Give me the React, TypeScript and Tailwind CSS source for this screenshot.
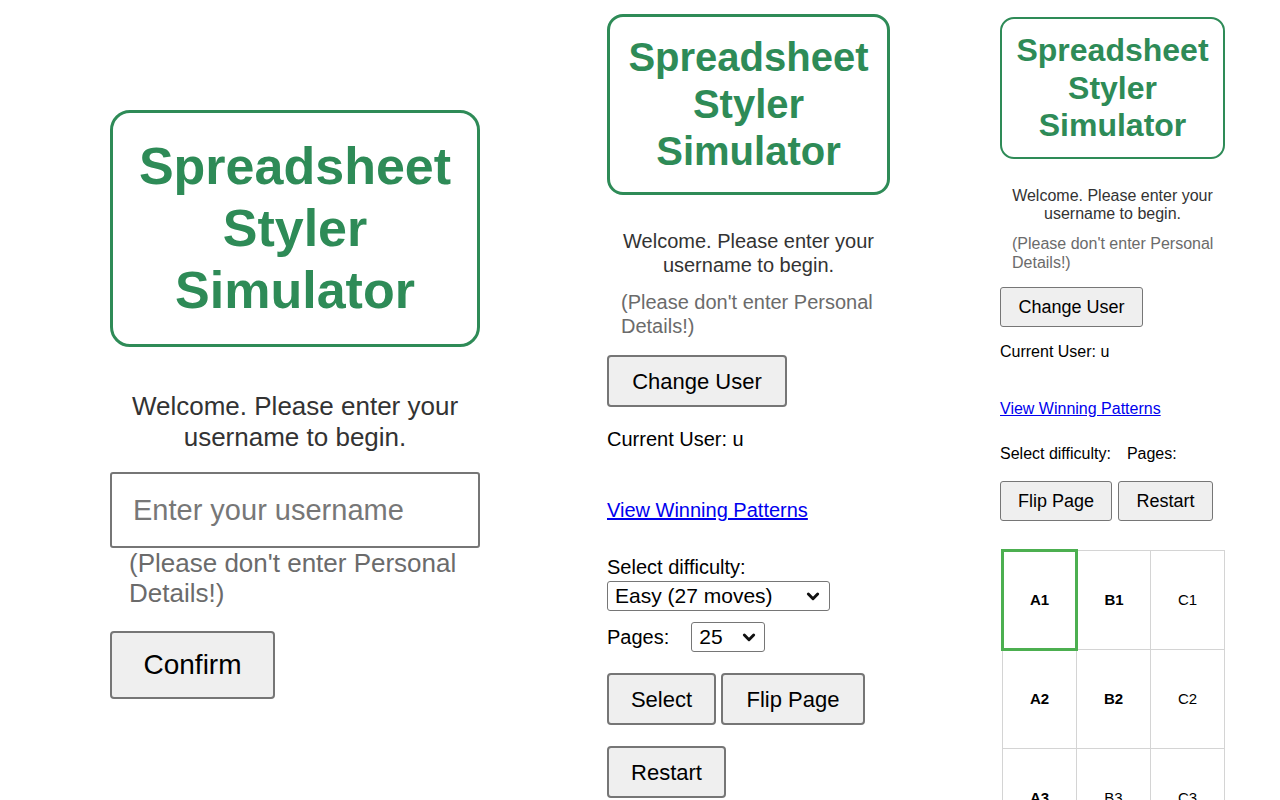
import React from "react";

const font = "font-['Liberation_Sans',Arial,sans-serif]";

function Chevron({ size }: { size: number }) {
  return (
    <svg width={size} height={size} viewBox="0 0 12 12" fill="none">
      <path d="M2.5 4.5 L6 8 L9.5 4.5" stroke="#111" strokeWidth="2.2" strokeLinecap="round" strokeLinejoin="round" />
    </svg>
  );
}

const cells = [
  [
    { label: "A1", bold: true, active: true },
    { label: "B1", bold: true },
    { label: "C1" },
  ],
  [{ label: "A2", bold: true }, { label: "B2", bold: true }, { label: "C2" }],
  [{ label: "A3", bold: true }, { label: "B3" }, { label: "C3" }],
  [{ label: "A4" }, { label: "B4" }, { label: "C4" }],
];

export default function App() {
  return (
    <div className={`${font} h-[800px] w-[1280px] overflow-hidden bg-white flex items-start text-black`}>
      {/* large login view */}
      <div className="ml-[110px] w-[370px] pt-[110px] flex flex-col shrink-0">
        <div className="h-[237px] border-[3px] border-[#2e8b57] rounded-[20px] py-[22px] text-center text-[#2e8b57] font-bold text-[52px] leading-[62px]">
          <div>Spreadsheet</div>
          <div>Styler</div>
          <div>Simulator</div>
        </div>
        <p className="mt-[44px] text-center text-[26px] leading-[31px] text-[#333]">
          Welcome. Please enter your
          <br />
          username to begin.
        </p>
        <input
          placeholder="Enter your username"
          className="mt-[19px] h-[76px] w-full border-2 border-[#767676] rounded-[3px] px-[21px] text-[29px] placeholder:text-[#777] outline-none"
        />
        <p className="pl-[19px] text-[26px] leading-[30px] text-[#6b6b6b]">
          (Please don't enter Personal
          <br />
          Details!)
        </p>
        <button className="mt-[23px] w-[165px] h-[68px] bg-[#efefef] border-2 border-[#767676] rounded-[4px] text-[28px]">
          Confirm
        </button>
      </div>

      {/* medium game view */}
      <div className="ml-[127px] w-[283px] pt-[14px] flex flex-col shrink-0">
        <div className="h-[181px] border-[3px] border-[#2e8b57] rounded-[16px] py-[17px] text-center text-[#2e8b57] font-bold text-[40px] leading-[47px]">
          <div>Spreadsheet</div>
          <div>Styler</div>
          <div>Simulator</div>
        </div>
        <p className="mt-[34px] text-center text-[20px] leading-[24px] text-[#333]">
          Welcome. Please enter your
          <br />
          username to begin.
        </p>
        <p className="mt-[13px] pl-[14px] text-[20px] leading-[24px] text-[#6b6b6b]">
          (Please don't enter Personal
          <br />
          Details!)
        </p>
        <button className="mt-[17px] w-[180px] h-[52px] bg-[#efefef] border-2 border-[#767676] rounded-[4px] text-[22px]">
          Change User
        </button>
        <p className="mt-[20px] text-[20px] leading-[24px]">Current User: u</p>
        <a href="#" className="mt-[47px] self-start text-[20px] leading-[24px] text-[#0000ee] underline">
          View Winning Patterns
        </a>
        <p className="mt-[33px] text-[20px] leading-[24px]">Select difficulty:</p>
        <div className="mt-[2px] w-[223px] h-[30px] border-[1.5px] border-[#767676] rounded-[3px] flex items-center justify-between pl-[7px] pr-[8px] text-[21px]">
          <span>Easy (27 moves)</span>
          <Chevron size={16} />
        </div>
        <div className="mt-[11px] flex items-center gap-[22px]">
          <span className="text-[20px] leading-[24px]">Pages:</span>
          <div className="w-[74px] h-[30px] border-[1.5px] border-[#767676] rounded-[3px] flex items-center justify-between pl-[7px] pr-[7px] text-[21px]">
            <span>25</span>
            <Chevron size={16} />
          </div>
        </div>
        <div className="mt-[21px] flex gap-[5px]">
          <button className="w-[109px] h-[52px] bg-[#efefef] border-2 border-[#767676] rounded-[4px] text-[22px]">
            Select
          </button>
          <button className="w-[144px] h-[52px] bg-[#efefef] border-2 border-[#767676] rounded-[4px] text-[22px]">
            Flip Page
          </button>
        </div>
        <button className="mt-[21px] w-[119px] h-[52px] bg-[#efefef] border-2 border-[#767676] rounded-[4px] text-[22px]">
          Restart
        </button>
      </div>

      {/* small game view with grid */}
      <div className="ml-[110px] w-[225px] pt-[17px] flex flex-col shrink-0">
        <div className="h-[142px] border-2 border-[#2e8b57] rounded-[14px] py-[13px] text-center text-[#2e8b57] font-bold text-[32px] leading-[37.5px]">
          <div>Spreadsheet</div>
          <div>Styler</div>
          <div>Simulator</div>
        </div>
        <p className="mt-[28px] text-center text-[16px] leading-[18px] text-[#333]">
          Welcome. Please enter your
          <br />
          username to begin.
        </p>
        <p className="mt-[11px] pl-[12px] text-[16px] leading-[19px] text-[#6b6b6b]">
          (Please don't enter Personal
          <br />
          Details!)
        </p>
        <button className="mt-[15px] w-[143px] h-[40px] bg-[#efefef] border-[1.5px] border-[#767676] rounded-[3px] text-[18px]">
          Change User
        </button>
        <p className="mt-[16px] text-[16px] leading-[18px]">Current User: u</p>
        <a href="#" className="mt-[39px] self-start text-[16px] leading-[18px] text-[#0000ee] underline">
          View Winning Patterns
        </a>
        <div className="mt-[27px] flex gap-[16px] text-[16px] leading-[18px]">
          <span>Select difficulty:</span>
          <span>Pages:</span>
        </div>
        <div className="mt-[18px] flex gap-[6px]">
          <button className="w-[112px] h-[40px] bg-[#efefef] border-[1.5px] border-[#767676] rounded-[3px] text-[18px]">
            Flip Page
          </button>
          <button className="w-[95px] h-[40px] bg-[#efefef] border-[1.5px] border-[#767676] rounded-[3px] text-[18px]">
            Restart
          </button>
        </div>
        <table className="mt-[28px] ml-px w-[224px] border-collapse table-fixed">
          <tbody>
            {cells.map((row, r) => (
              <tr key={r} className="h-[99px]">
                {row.map((c) => (
                  <td
                    key={c.label}
                    className={`text-center text-[15px] ${c.bold ? "font-bold" : ""} ${
                      c.active ? "border-[3px] border-[#4caf50]" : "border border-[#d4d4d4]"
                    }`}
                  >
                    {c.label}
                  </td>
                ))}
              </tr>
            ))}
          </tbody>
        </table>
      </div>
    </div>
  );
}
